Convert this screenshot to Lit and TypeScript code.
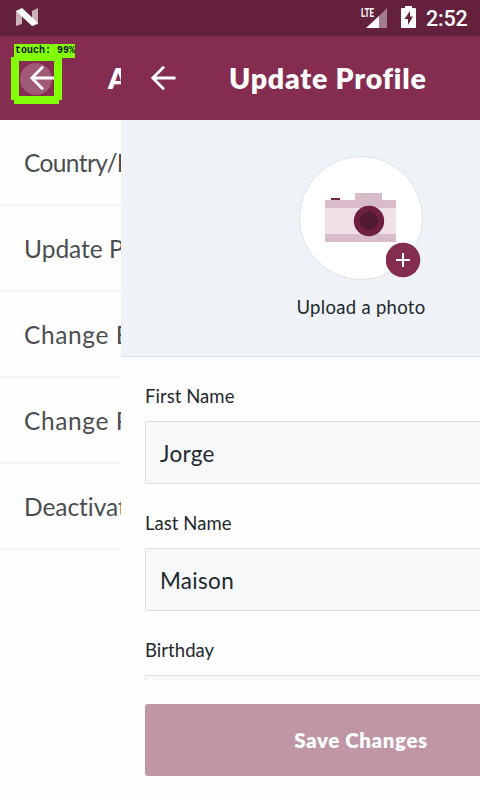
import { LitElement, html, css, svg } from "lit";
import { customElement } from "lit/decorators.js";
import { styleMap } from "lit/directives/style-map.js";

const arrow = html`<svg class="arrow" width="26" height="26" viewBox="0 0 26 26">
  <path d="M25.500 13H3M14 1.800 2.800 13l11.200 11.200" fill="none" stroke="#fff" stroke-width="2.800" />
</svg>`;

const camera = svg`
  <path fill="#d9bcc9" d="M31 7V0h27v7h14v42H1V7z"/>
  <path fill="#efe1e7" d="M1 15h71v26H1z"/>
  <path fill="#732345" d="M7 5h9v2H7z"/>
  <circle cx="45" cy="28" r="15.2" fill="#70203f"/>
  <circle cx="45" cy="28" r="9.2" fill="#521a31"/>`;

const settings = [
  { label: "Country/Region", tracking: -0.6 },
  { label: "Update Profile", tracking: 0 },
  { label: "Change Email", tracking: 0.6 },
  { label: "Change Password", tracking: 0.6 },
  { label: "Deactivate Account", tracking: -0.05 },
];

@customElement("app-root")
export class AppRoot extends LitElement {
  static styles = css`
    :host {
      display: block;
      position: relative;
      width: 480px;
      height: 800px;
      overflow: hidden;
      background: #fefefe;
      font-family: Lato, "Open Sans", sans-serif;
      font-variant-ligatures: none;
      color: #22292e;
    }
    * { box-sizing: border-box; }
    svg { display: block; flex: none; }
    .status {
      display: flex;
      align-items: center;
      height: 36px;
      padding: 0 11px 0 16px;
      background: #64213d;
      color: #fff;
    }
    .signal { margin-left: auto; overflow: visible; }
    .battery { margin: 0 0 2px 13px; }
    .clock {
      margin-left: 10px;
      width: 43px;
      font: 500 21.5px/36px Roboto, sans-serif;
      letter-spacing: -0.2px;
      white-space: nowrap;
      padding-top: 2px;
    }
    .screens { display: flex; height: 764px; }
    .back-screen { width: 121px; overflow: hidden; white-space: nowrap; flex: none; }
    .front-screen { width: 359px; overflow: hidden; flex: none; display: flex; flex-direction: column; }
    .bar {
      display: flex;
      align-items: center;
      height: 84px;
      background: #852c51;
      color: #fff;
      font-weight: 800;
      font-size: 28.5px;
      white-space: nowrap;
    }
    .back-screen .bar { padding-left: 29px; gap: 53px; }
    .front-screen .bar { padding-left: 29px; gap: 53px; flex: none; }
    .title { letter-spacing: 0.8px; }
    .item {
      height: 86px;
      line-height: 85px;
      padding-left: 24px;
      border-bottom: 2px solid #f5f5f6;
      font-size: 24.5px;
      color: #4b4e50;
      overflow: hidden;
    }
    .photo {
      height: 237px;
      width: 480px;
      flex: none;
      display: flex;
      flex-direction: column;
      align-items: center;
      padding-top: 36px;
      background: #eff3f7;
      border-bottom: 1px solid #d3e1e9;
    }
    .avatar {
      position: relative;
      width: 124px;
      height: 124px;
      border-radius: 50%;
      border: 1px solid #dbe3ea;
      background: #fff;
      padding: 36px 0 0 24px;
    }
    .plus { position: absolute; left: 86px; top: 85px; }
    .caption { font-size: 18.5px; line-height: 24px; margin-top: 15px; letter-spacing: 0.3px; }
    .form { width: 480px; height: 323px; padding: 26px 24px 0; overflow: hidden; flex: none; }
    .label { font-size: 18.5px; line-height: 26px; margin-bottom: 12px; letter-spacing: 0.05px; }
    .field {
      height: 63px;
      line-height: 63px;
      padding-left: 14px;
      margin-bottom: 26px;
      border: 1px solid #d8e0e7;
      border-radius: 2px;
      background: #f6f8fa;
      font-size: 22.5px;
      letter-spacing: 0.3px;
    }
    .save {
      width: 432px;
      height: 72px;
      margin: 24px 24px 0;
      flex: none;
      border-radius: 3px;
      background: #c095a5;
      color: #fff;
      font-weight: 800;
      font-size: 20.5px;
      letter-spacing: 0.6px;
      line-height: 72px;
      text-align: center;
    }
    .touch { position: absolute; left: 11px; top: 44px; width: 64px; height: 60px; }
    .ring { position: absolute; left: 0; top: 0; }
    .tag {
      position: absolute;
      left: 3px;
      top: 0;
      width: 61px;
      height: 14px;
      padding-left: 1px;
      background: #82ff05;
      color: #111;
      font: 700 10px/14px "Liberation Mono", monospace;
      white-space: nowrap;
    }
  `;

  render() {
    return html`
      <div class="status">
        <svg width="22" height="20" viewBox="0 0 22 20">
          <path fill="#c9b0bb" d="M0 3l6-2v15l-6 2zM16 3l6-3v16l-6 2z" />
          <path fill="#fff" d="M0 3l6-3 16 15-6 3z" />
        </svg>
        <svg class="signal" width="27" height="22" viewBox="0 0 27 22">
          <path fill="#fff" d="M5 21 18 9v12z" />
          <path fill="#a27c8c" d="M18 9l8-8v20h-8z" />
          <text x="0" y="10" fill="#fff" font-family="Roboto, sans-serif" font-weight="700" font-size="12.5" textLength="13" lengthAdjust="spacingAndGlyphs">LTE</text>
        </svg>
        <svg class="battery" width="15" height="22" viewBox="0 0 15 22">
          <path fill="#fff" d="M1 2h3V0h7v2h3q1 0 1 1v18q0 1-1 1H1q-1 0-1-1V3q0-1 1-1z" />
          <path fill="#64213d" d="M9 5 3.500 13H7v6l5-8.500H9z" />
        </svg>
        <div class="clock">2:52</div>
      </div>
      <div class="screens">
        <div class="back-screen">
          <div class="bar">${arrow}<span>Account</span></div>
          ${settings.map(
            (s) => html`<div class="item" style=${styleMap({ letterSpacing: `${s.tracking}px` })}>${s.label}</div>`
          )}
        </div>
        <div class="front-screen">
          <div class="bar">${arrow}<span class="title">Update Profile</span></div>
          <div class="photo">
            <div class="avatar">
              <svg width="73" height="50" viewBox="0 0 73 50">${camera}</svg>
              <svg class="plus" width="36" height="36" viewBox="0 0 36 36">
                <circle cx="17" cy="18" r="17.3" fill="#852c51" />
                <path d="M17 11v14M10 18h14" stroke="#fff" stroke-width="2" />
              </svg>
            </div>
            <div class="caption">Upload a photo</div>
          </div>
          <div class="form">
            <div class="label">First Name</div>
            <div class="field">Jorge</div>
            <div class="label">Last Name</div>
            <div class="field">Maison</div>
            <div class="label">Birthday</div>
            <div class="field"></div>
          </div>
          <div class="save">Save Changes</div>
        </div>
      </div>
      <div class="touch">
        <svg class="ring" width="52" height="60" viewBox="0 0 52 60">
          <circle cx="25" cy="35" r="16" fill="#fff" opacity=".22" />
          <path fill="#82ff05" fill-rule="evenodd" d="M0 13h51v43h-3v4H3v-4H0zM8 17v35h35V17z" />
        </svg>
        <div class="tag">touch: 99%</div>
      </div>
    `;
  }
}
